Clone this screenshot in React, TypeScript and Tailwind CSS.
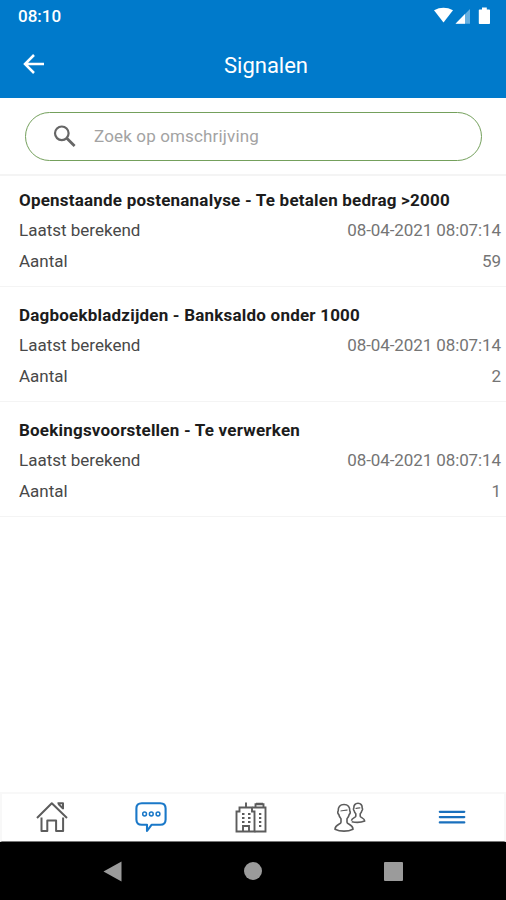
import React, { useState } from 'react';

interface Signal {
  id: number;
  title: string;
  calculatedAt: string;
  count: number;
}

const SIGNALS: Signal[] = [
  { id: 1, title: 'Openstaande postenanalyse - Te betalen bedrag >2000', calculatedAt: '08-04-2021 08:07:14', count: 59 },
  { id: 2, title: 'Dagboekbladzijden - Banksaldo onder 1000', calculatedAt: '08-04-2021 08:07:14', count: 2 },
  { id: 3, title: 'Boekingsvoorstellen - Te verwerken', calculatedAt: '08-04-2021 08:07:14', count: 1 },
];

const StatusIcons: React.FC = () => (
  <svg width="58" height="20" viewBox="0 0 58 20" fill="#fff">
    <path d="M0 3.200Q9.500 -1.500 19 3.200L9.500 15.600Z" />
    <path d="M21.500 16.800 36 2V16.800Z" opacity=".4" />
    <path d="M21.500 16.800 31 7V16.800Z" />
    <path d="M45.600 2.500H48V.5h4.800v2h2.400q.8 0 .8.800v12.900q0 .8-.8.8h-9.600q-.8 0-.8-.8V3.300q0-.8.8-.8Z" />
  </svg>
);

const HomeIcon: React.FC = () => (
  <svg width="32" height="32" viewBox="0 0 32 32" fill="none" stroke="#5c5c5c" strokeWidth="2" strokeLinejoin="round">
    <path d="M1 17 15.800 2.300 31 17" />
    <path d="M21.500 2.300h5.500v6M22.500 3l4.500 4.500" />
    <path d="M5.500 16.500V30h5.800V19.500h8.800V30h7V16.500" />
  </svg>
);

const SignalsIcon: React.FC = () => (
  <svg width="32" height="32" viewBox="0 0 32 32" fill="none" stroke="#1a78c8" strokeWidth="2.100" strokeLinejoin="round">
    <path d="M6.800 2.200h18.400q5.400 0 5.400 5.400v10.800q0 5.400-5.400 5.400H16.500L12 30v-6.200H6.800q-5.400 0-5.400-5.400V7.600q0-5.400 5.400-5.400Z" />
    <g strokeWidth="1.500">
      <circle cx="9.600" cy="13" r="1.900" />
      <circle cx="16.300" cy="13" r="1.900" />
      <circle cx="23" cy="13" r="1.900" />
    </g>
  </svg>
);

const BuildingsIcon: React.FC = () => (
  <svg width="32" height="32" viewBox="0 0 32 32" fill="none" stroke="#5c5c5c" strokeWidth="1.900">
    <path d="M1.500 30.500V10.500h3V6.500h12.500v4h2.500V30.500ZM11 6.500V1.500" />
    <path d="M17.500 6.500h13V30.500h-11M20.500 6.500V3.200h8v3.300M21 2.800h7" />
    <path d="M8 30.500v-5.500h6v5.500" />
    <path d="M7 13h2.500M13 13h2.500M7 17h2.500M13 17h2.500M7 21h2.500M13 21h2.500M24 13h2.300M24 17h2.300M24 21h2.300M24 25h2.300" strokeWidth="2.200" />
  </svg>
);

const PeopleIcon: React.FC = () => (
  <svg width="32" height="32" viewBox="0 0 32 32" fill="none" stroke="#5c5c5c" strokeWidth="1.600" strokeLinejoin="round">
    <path d="M10 3.500c4 0 6 2.400 5.800 6.500.8.800.5 2.700-.6 3.500-.4 2-1.200 3.300-2.200 4.300v3.400c0 2.200 6 2.300 6 7-5.200 2.600-12.800 2.600-18 0 0-4.700 6-4.800 6-7v-3.400c-1-1-1.800-2.300-2.200-4.300-1.100-.8-1.400-2.700-.6-3.500C4 5.900 6 3.500 10 3.500Z" />
    <path d="M6.500 10c2.600 0 4.600-1.200 7-.8M21.500 7.500c1.700 0 3-.8 4.800-.6" strokeWidth="1.200" />
    <path d="M17.500 19.800c0-2.800 4.300-3.300 4.300-4.600v-2.400c-.8-.8-1.400-1.700-1.600-3-.8-.6-1-2-.4-2.600-.1-3 1.300-4.900 4.200-4.900s4.300 1.900 4.200 4.900c.6.600.4 2-.4 2.600-.2 1.300-.8 2.200-1.600 3v2.400c0 1.300 4.500 1.800 4.500 4.800-3.600 1.500-8.500 1.600-13 .8" />
  </svg>
);

const MenuIcon: React.FC = () => (
  <svg width="28" height="16" viewBox="0 0 28 16" stroke="#1a70bd" strokeWidth="2.200" strokeLinecap="round">
    <path d="M1.800 2.800h24.500M1.800 8.100h24.500M1.800 13.400h24.500" />
  </svg>
);

const SignalRow: React.FC<{ signal: Signal }> = ({ signal }) => (
  <li className="h-[115px] border-b border-[#f4f4f4] pt-[13px] pr-[5px] pl-[19px] text-[17px] first:h-[111px] first:pt-[9px]">
    <h2 className="h-[30px] leading-[30px] font-bold tracking-[0.21px] whitespace-nowrap text-[#1c1c1c]">{signal.title}</h2>
    <div className="flex h-[31px] justify-between leading-[31px]">
      <span className="text-[#484848]">Laatst berekend</span>
      <span className="tracking-[-0.1px] text-[#757575]">{signal.calculatedAt}</span>
    </div>
    <div className="flex h-[30px] justify-between leading-[30px]">
      <span className="text-[#484848]">Aantal</span>
      <span className="text-[#757575]">{signal.count}</span>
    </div>
  </li>
);

export default function App() {
  const [search, setSearch] = useState('');

  const visibleSignals = SIGNALS.filter(s => s.title.toLowerCase().includes(search.toLowerCase()));

  return (
    <div className="flex h-[900px] w-[506px] flex-col overflow-hidden bg-white font-['Roboto',sans-serif]">
      <header className="h-[98px] shrink-0 bg-[#007acb] text-white">
        <div className="flex h-[33px] items-center justify-between pr-[14px] pl-[18px]">
          <span className="text-[17px] font-medium">08:10</span>
          <StatusIcons />
        </div>
        <div className="grid h-[65px] grid-cols-[80px_1fr_54px] items-center">
          <button className="pb-[3px] pl-[23px]" aria-label="Terug">
            <svg width="22" height="20" viewBox="0 0 22 20" fill="none" stroke="#fff" strokeWidth="2.500">
              <path d="M21 10H2M11 1 2 10l9 9" />
            </svg>
          </button>
          <h1 className="text-center text-[22px]">Signalen</h1>
        </div>
      </header>

      <div className="h-[78px] shrink-0 border-b-2 border-[#f4f4f4] pt-[14px] pr-6 pl-[25px]">
        <label className="flex h-[49px] items-center rounded-full border-[1.5px] border-[#74a05c] pl-[27px]">
          <svg width="24" height="24" viewBox="0 0 24 24" fill="none" stroke="#666" strokeWidth="2.200">
            <circle cx="8.800" cy="8.300" r="6.800" />
            <path d="m13.800 13.300 7.800 7.800" strokeWidth="2.800" />
          </svg>
          <input
            type="text"
            placeholder="Zoek op omschrijving"
            value={search}
            onChange={(e) => setSearch(e.target.value)}
            className="ml-[17px] flex-1 text-[17px] tracking-[0.15px] text-[#484848] placeholder:text-[#a3a3a3] focus:outline-none"
          />
        </label>
      </div>

      <ul className="flex-1">
        {visibleSignals.map(signal => (
          <SignalRow key={signal.id} signal={signal} />
        ))}
      </ul>

      <nav className="grid h-[50px] shrink-0 grid-cols-[99.5px_99.5px_99.5px_99.5px_1fr] items-center justify-items-center border-x-2 border-t-2 border-b border-[#f8f8f8] border-b-[#777] pb-[2px]">
        <HomeIcon />
        <SignalsIcon />
        <BuildingsIcon />
        <PeopleIcon />
        <MenuIcon />
      </nav>

      {/* Android navigation bar */}
      <div className="flex h-[58px] shrink-0 items-center justify-between bg-black pr-[103px] pl-[103px]">
        <svg width="19" height="21" viewBox="0 0 19 21" fill="#9b9b9b">
          <path d="M18.500.5v20L.5 10.500Z" />
        </svg>
        <div className="h-[18px] w-[18px] rounded-full bg-[#9b9b9b]" />
        <div className="h-[19px] w-[19px] rounded-[1px] bg-[#9b9b9b]" />
      </div>
    </div>
  );
}
